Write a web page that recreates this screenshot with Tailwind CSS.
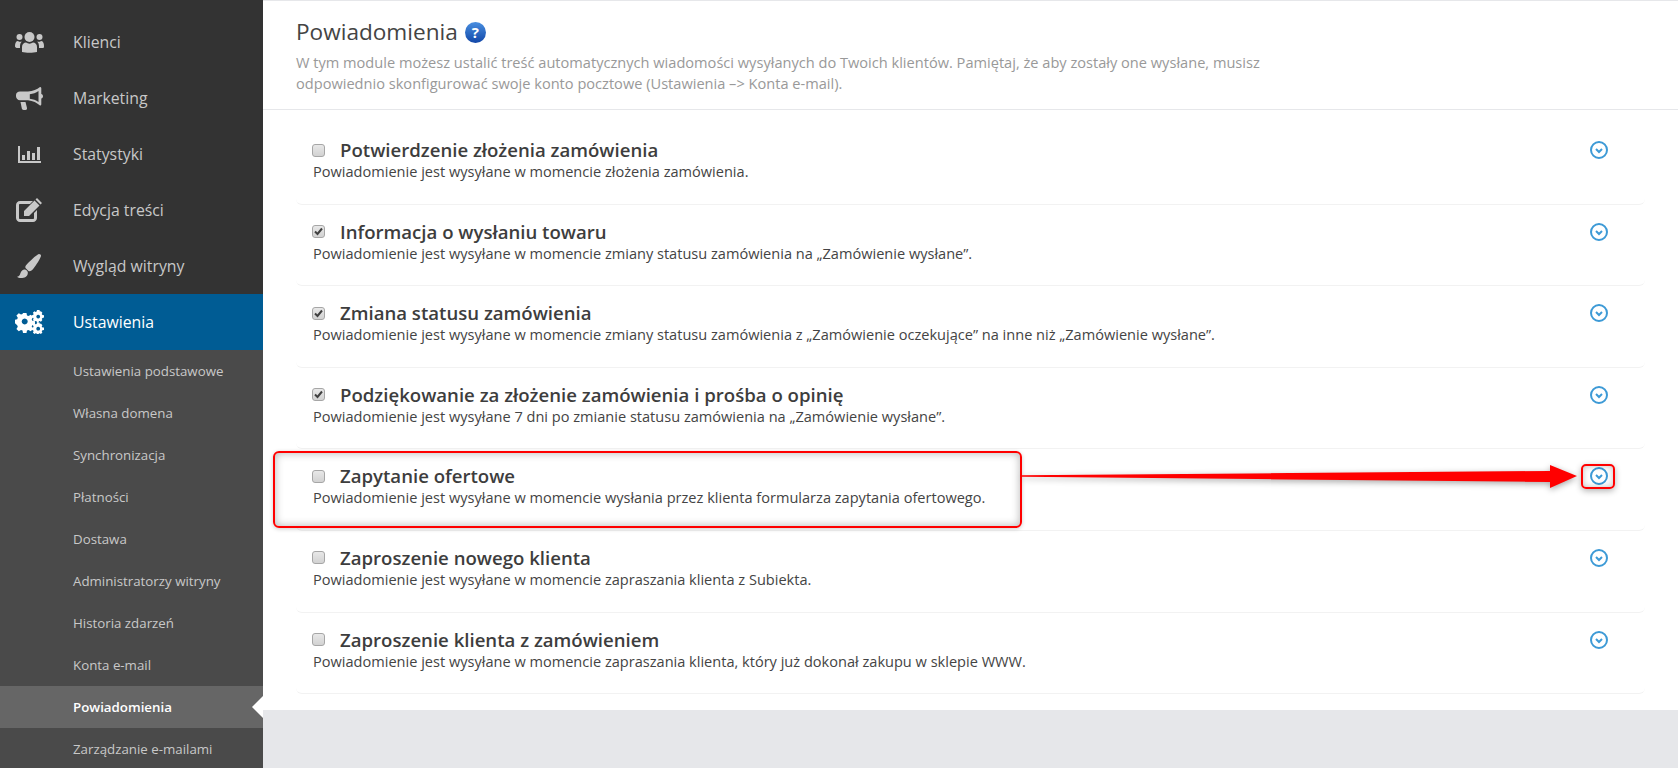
<!DOCTYPE html>
<html lang="pl">
<head>
  <meta charset="UTF-8">
  <title>Powiadomienia</title>
  <script src="https://cdn.jsdelivr.net/npm/@tailwindcss/browser@4"></script>
</head>
<body class="h-screen overflow-hidden bg-[#e6e7ea] font-['Open_Sans',sans-serif]">
  <div class="relative flex h-[768px] overflow-hidden">
    <!-- sidebar -->
    <aside class="w-[263px] shrink-0 bg-[#333333] pt-[14px] text-[#c8c8c8]">
      <a class="flex h-14 items-center"><span class="flex w-[73px] justify-center pr-[15px]">
        <svg class="h-[22px] w-[29px]" viewBox="0 0 29 22" fill="#c8c8c8"><circle cx="14.500" cy="6" r="5"/><circle cx="4.500" cy="6" r="3"/><circle cx="24.500" cy="6" r="3"/><path d="M7 21v-5c0-3 2-4.500 4-4.500 2 1.500 5 1.500 7 0 2 0 4 1.500 4 4.500v5c-4 1-11 1-15 0z"/><path d="M0 15c0-3 1-5 3-5 1 1 3 1 4 .5-1.500 1-2 2.800-2 5v1.500H1.500C.5 16.500 0 16 0 15zM29 15c0-3-1-5-3-5-1 1-3 1-4 .5 1.500 1 2 2.800 2 5v1.500h3.500c1 0 1.500-.5 1.500-1.500z"/></svg></span>
        <span class="mt-[2px] text-[15.800px]">Klienci</span></a>
      <a class="flex h-14 items-center"><span class="flex w-[73px] justify-center pr-[15px]">
        <svg class="h-[23px] w-[27px]" viewBox="0 0 27 23" fill="#c8c8c8"><path d="M24 0c.800 0 1.300.600 1.300 1.300v5.700c1 .300 1.700 1.200 1.700 2.300s-.700 2-1.700 2.300v5.700c0 .700-.500 1.300-1.300 1.300-3-2.600-7-4.800-12-5.300H4c-2.200 0-4-1.800-4-4V8c0-2.200 1.800-3.500 4-3.500h8c5-.5 9-1.900 12-4.500zm-1.500 4c-2.500 1.800-5.500 2.900-8.700 3.300v4.400c3.200.4 6.200 1.500 8.700 3.300z"/><path d="M4.500 15h5l1.500 6c.2 1-.5 2-1.500 2H7.500c-.8 0-1.400-.5-1.600-1.200z"/></svg></span>
        <span class="mt-[2px] text-[15.800px]">Marketing</span></a>
      <a class="flex h-14 items-center"><span class="flex w-[73px] justify-center pr-[15px]">
        <svg class="h-[17px] w-[23px]" viewBox="0 0 23 17" fill="#c8c8c8"><path d="M0 0h2v15h21v2H0z"/><rect x="4" y="9" width="3" height="5"/><rect x="9" y="5" width="3" height="9"/><rect x="14" y="7" width="3" height="7"/><rect x="19" y="1" width="3" height="13"/></svg></span>
        <span class="mt-[2px] text-[15.800px]">Statystyki</span></a>
      <a class="flex h-14 items-center"><span class="flex w-[73px] justify-center pr-[15px]">
        <svg class="h-[24px] w-[26px]" viewBox="0 0 26 24" fill="#c8c8c8"><path d="M4 3h13l-3 3H4c-.600 0-1 .400-1 1v13c0 .600.400 1 1 1h13c.600 0 1-.400 1-1v-5l3-3v8c0 2.200-1.800 4-4 4H4c-2.200 0-4-1.800-4-4V7c0-2.200 1.800-4 4-4z"/><path d="M21 0l5 5-1.500 1.500-5-5zM18.500 2.500l5 5L13 18H8v-5z"/></svg></span>
        <span class="mt-[2px] text-[15.800px]">Edycja treści</span></a>
      <a class="flex h-14 items-center"><span class="flex w-[73px] justify-center pr-[15px]">
        <svg class="h-[24px] w-[24px]" viewBox="0 0 24 24" fill="#c8c8c8"><path d="M22 0c1.200 0 2 .800 2 1.800 0 .700-.500 1.700-1.200 2.900C20.500 9 17 14.500 14.500 16.500c-1 .800-2 1-3 .600L8.500 14c-.400-1 0-2.200 1-3.200C12 8 19 1 22 0z"/><path d="M7 15.500c1-.200 2 .100 2.800.900.800.800 1.200 1.800 1 2.800C10.500 22.500 7.500 24 4 24c-1.800 0-3.200-.400-4-1.200 1.500-.500 2.500-1 3-2.300.500-2 1.500-4.500 4-5z"/></svg></span>
        <span class="mt-[2px] text-[15.800px]">Wygląd witryny</span></a>
      <a class="flex h-14 items-center bg-[#005c94] text-white"><span class="flex w-[73px] justify-center pr-[15px]">
        <svg class="h-[24px] w-[29px]" viewBox="0 0 29 24" fill="#fff"><path fill-rule="evenodd" d="M8 4h3.500l.5 2.500 1.500.6 2.200-1.400 2.400 2.400-1.400 2.200.6 1.500 2.700.5v3.400l-2.700.5-.6 1.500 1.400 2.200-2.400 2.400-2.200-1.400-1.500.6-.5 2.500H8l-.5-2.500-1.500-.6-2.200 1.400-2.400-2.400 1.400-2.200-.6-1.500L0 14.200v-3.400l2.200-.5.6-1.500-1.400-2.200 2.400-2.400L6 5.600l1.500-.6zM9.700 9.500a3 3 0 1 0 .01 0z" transform="translate(0 -1)"/><path fill-rule="evenodd" d="M22 0h2.500l.4 1.500 1-.3 1.500 1.600-.7 1.200.8 1 1.500.2v2.400l-1.500.3-.8 1 .7 1.200-1.500 1.600-1.200-.7-.8.3-.4 1.400H22l-.4-1.400-1-.4-1.200.7-1.500-1.600.7-1.200-.5-1-1.500-.3V5.200l1.500-.2.500-1-.7-1.200 1.500-1.600 1.200.7 1-.4zM23.200 4.700a1.900 1.900 0 1 0 .01 0z"/><path fill-rule="evenodd" d="M22 12.500h2.500l.4 1.400 1-.3 1.500 1.600-.7 1.200.8 1 1.500.2V20l-1.500.3-.8 1 .7 1.200-1.500 1.500-1.200-.7-.8.3-.2.400H22l-.4-.4-1-.3-1.200.7-1.500-1.500.7-1.200-.5-1-1.500-.3v-2.400l1.500-.2.500-1-.7-1.200 1.500-1.600 1.200.7 1-.4zM23.200 16.800a1.900 1.900 0 1 0 .01 0z"/></svg></span>
        <span class="mt-[2px] text-[15.800px]">Ustawienia</span></a>
      <nav class="bg-[#4a4a4a] text-[13.300px]">
        <a class="flex h-[42px] items-center pl-[73px] pt-[1px]">Ustawienia podstawowe</a>
        <a class="flex h-[42px] items-center pl-[73px] pt-[1px]">Własna domena</a>
        <a class="flex h-[42px] items-center pl-[73px] pt-[1px]">Synchronizacja</a>
        <a class="flex h-[42px] items-center pl-[73px] pt-[1px]">Płatności</a>
        <a class="flex h-[42px] items-center pl-[73px] pt-[1px]">Dostawa</a>
        <a class="flex h-[42px] items-center pl-[73px] pt-[1px]">Administratorzy witryny</a>
        <a class="flex h-[42px] items-center pl-[73px] pt-[1px]">Historia zdarzeń</a>
        <a class="flex h-[42px] items-center pl-[73px] pt-[1px]">Konta e-mail</a>
        <a class="relative flex h-[42px] items-center bg-[#666666] pl-[73px] pt-[1px] font-semibold text-white">Powiadomienia
          <span class="absolute right-0 top-[10px] h-0 w-0 border-y-[11px] border-r-[11px] border-y-transparent border-r-white"></span></a>
        <a class="flex h-[42px] items-center pl-[73px] pt-[1px]">Zarządzanie e-mailami</a>
      </nav>
    </aside>

    <!-- main -->
    <main class="flex-1 self-start bg-white">
      <header class="h-[110px] border-y border-[#e6e7ea] pl-[33px] pt-[15px]">
        <div class="flex items-center gap-[7px]">
          <h1 class="text-[22.600px] leading-[32px] text-[#444]">Powiadomienia</h1>
          <span class="flex h-[21px] w-[21px] items-center justify-center rounded-full bg-gradient-to-b from-[#4a8fe0] to-[#1247a8] text-[15px] leading-none font-bold text-white">?</span>
        </div>
        <p class="mt-[4px] w-[1010px] text-[14.600px] leading-[21px] text-[#999]">W tym module możesz ustalić treść automatycznych wiadomości wysyłanych do Twoich klientów. Pamiętaj, że aby zostały one wysłane, musisz odpowiednio skonfigurować swoje konto pocztowe (Ustawienia –&gt; Konta e-mail).</p>
      </header>
      <section class="ml-[33px] w-[1349px] pb-[15.500px] pt-[13px]">
        <div class="flex h-[81.600px] items-start justify-between rounded-b-md border-b border-[#f2f2f2] pl-[17px] pr-[36px] pt-[16px]">
          <div>
            <div class="flex h-[22px] items-center"><span class="relative -ml-[1px] mr-[15px] flex"><input type="checkbox" class="h-[13px] w-[13px] appearance-none rounded-[3px] border border-[#a6a6a6] bg-gradient-to-b from-[#e8e8e8] to-[#d2d2d2]"></span><h2 class="text-[18.600px] font-semibold text-[#3d3d3d]">Potwierdzenie złożenia zamówienia</h2></div>
            <p class="text-[14.570px] leading-[20px] text-[#444]">Powiadomienie jest wysyłane w momencie złożenia zamówienia.</p>
          </div>
          <svg class="mt-[1px] h-5 w-5" viewBox="0 0 20 20" fill="none" stroke="#3d9ad6" stroke-width="2"><circle cx="10" cy="10" r="8"/><path d="M7 9l3 3 3-3"/></svg>
        </div>
        <div class="flex h-[81.600px] items-start justify-between rounded-b-md border-b border-[#f2f2f2] pl-[17px] pr-[36px] pt-[16px]">
          <div>
            <div class="flex h-[22px] items-center"><span class="relative -ml-[1px] mr-[15px] flex"><input type="checkbox" checked class="h-[13px] w-[13px] appearance-none rounded-[3px] border border-[#a6a6a6] bg-gradient-to-b from-[#e8e8e8] to-[#d2d2d2]"><svg class="absolute left-[2px] top-[2px] h-[9px] w-[9px]" viewBox="0 0 9 9" fill="none" stroke="#404040" stroke-width="2"><path d="M1 4.500l2.500 2.500L8 1.500"/></svg></span><h2 class="text-[18.600px] font-semibold text-[#3d3d3d]">Informacja o wysłaniu towaru</h2></div>
            <p class="text-[14.570px] leading-[20px] text-[#444]">Powiadomienie jest wysyłane w momencie zmiany statusu zamówienia na „Zamówienie wysłane”.</p>
          </div>
          <svg class="mt-[1px] h-5 w-5" viewBox="0 0 20 20" fill="none" stroke="#3d9ad6" stroke-width="2"><circle cx="10" cy="10" r="8"/><path d="M7 9l3 3 3-3"/></svg>
        </div>
        <div class="flex h-[81.600px] items-start justify-between rounded-b-md border-b border-[#f2f2f2] pl-[17px] pr-[36px] pt-[16px]">
          <div>
            <div class="flex h-[22px] items-center"><span class="relative -ml-[1px] mr-[15px] flex"><input type="checkbox" checked class="h-[13px] w-[13px] appearance-none rounded-[3px] border border-[#a6a6a6] bg-gradient-to-b from-[#e8e8e8] to-[#d2d2d2]"><svg class="absolute left-[2px] top-[2px] h-[9px] w-[9px]" viewBox="0 0 9 9" fill="none" stroke="#404040" stroke-width="2"><path d="M1 4.500l2.500 2.500L8 1.500"/></svg></span><h2 class="text-[18.600px] font-semibold text-[#3d3d3d]">Zmiana statusu zamówienia</h2></div>
            <p class="text-[14.570px] leading-[20px] text-[#444]">Powiadomienie jest wysyłane w momencie zmiany statusu zamówienia z „Zamówienie oczekujące” na inne niż „Zamówienie wysłane”.</p>
          </div>
          <svg class="mt-[1px] h-5 w-5" viewBox="0 0 20 20" fill="none" stroke="#3d9ad6" stroke-width="2"><circle cx="10" cy="10" r="8"/><path d="M7 9l3 3 3-3"/></svg>
        </div>
        <div class="flex h-[81.600px] items-start justify-between rounded-b-md border-b border-[#f2f2f2] pl-[17px] pr-[36px] pt-[16px]">
          <div>
            <div class="flex h-[22px] items-center"><span class="relative -ml-[1px] mr-[15px] flex"><input type="checkbox" checked class="h-[13px] w-[13px] appearance-none rounded-[3px] border border-[#a6a6a6] bg-gradient-to-b from-[#e8e8e8] to-[#d2d2d2]"><svg class="absolute left-[2px] top-[2px] h-[9px] w-[9px]" viewBox="0 0 9 9" fill="none" stroke="#404040" stroke-width="2"><path d="M1 4.500l2.500 2.500L8 1.500"/></svg></span><h2 class="text-[18.600px] font-semibold text-[#3d3d3d]">Podziękowanie za złożenie zamówienia i prośba o opinię</h2></div>
            <p class="text-[14.570px] leading-[20px] text-[#444]">Powiadomienie jest wysyłane 7 dni po zmianie statusu zamówienia na „Zamówienie wysłane”.</p>
          </div>
          <svg class="mt-[1px] h-5 w-5" viewBox="0 0 20 20" fill="none" stroke="#3d9ad6" stroke-width="2"><circle cx="10" cy="10" r="8"/><path d="M7 9l3 3 3-3"/></svg>
        </div>
        <div class="flex h-[81.600px] items-start justify-between rounded-b-md border-b border-[#f2f2f2] pl-[17px] pr-[36px] pt-[16px]">
          <div>
            <div class="flex h-[22px] items-center"><span class="relative -ml-[1px] mr-[15px] flex"><input type="checkbox" class="h-[13px] w-[13px] appearance-none rounded-[3px] border border-[#a6a6a6] bg-gradient-to-b from-[#e8e8e8] to-[#d2d2d2]"></span><h2 class="text-[18.600px] font-semibold text-[#3d3d3d]">Zapytanie ofertowe</h2></div>
            <p class="text-[14.570px] leading-[20px] text-[#444]">Powiadomienie jest wysyłane w momencie wysłania przez klienta formularza zapytania ofertowego.</p>
          </div>
          <svg class="mt-[1px] h-5 w-5" viewBox="0 0 20 20" fill="none" stroke="#3d9ad6" stroke-width="2"><circle cx="10" cy="10" r="8"/><path d="M7 9l3 3 3-3"/></svg>
        </div>
        <div class="flex h-[81.600px] items-start justify-between rounded-b-md border-b border-[#f2f2f2] pl-[17px] pr-[36px] pt-[16px]">
          <div>
            <div class="flex h-[22px] items-center"><span class="relative -ml-[1px] mr-[15px] flex"><input type="checkbox" class="h-[13px] w-[13px] appearance-none rounded-[3px] border border-[#a6a6a6] bg-gradient-to-b from-[#e8e8e8] to-[#d2d2d2]"></span><h2 class="text-[18.600px] font-semibold text-[#3d3d3d]">Zaproszenie nowego klienta</h2></div>
            <p class="text-[14.570px] leading-[20px] text-[#444]">Powiadomienie jest wysyłane w momencie zapraszania klienta z Subiekta.</p>
          </div>
          <svg class="mt-[1px] h-5 w-5" viewBox="0 0 20 20" fill="none" stroke="#3d9ad6" stroke-width="2"><circle cx="10" cy="10" r="8"/><path d="M7 9l3 3 3-3"/></svg>
        </div>
        <div class="flex h-[81.600px] items-start justify-between rounded-b-md border-b border-[#f2f2f2] pl-[17px] pr-[36px] pt-[16px]">
          <div>
            <div class="flex h-[22px] items-center"><span class="relative -ml-[1px] mr-[15px] flex"><input type="checkbox" class="h-[13px] w-[13px] appearance-none rounded-[3px] border border-[#a6a6a6] bg-gradient-to-b from-[#e8e8e8] to-[#d2d2d2]"></span><h2 class="text-[18.600px] font-semibold text-[#3d3d3d]">Zaproszenie klienta z zamówieniem</h2></div>
            <p class="text-[14.570px] leading-[20px] text-[#444]">Powiadomienie jest wysyłane w momencie zapraszania klienta, który już dokonał zakupu w sklepie WWW.</p>
          </div>
          <svg class="mt-[1px] h-5 w-5" viewBox="0 0 20 20" fill="none" stroke="#3d9ad6" stroke-width="2"><circle cx="10" cy="10" r="8"/><path d="M7 9l3 3 3-3"/></svg>
        </div>
      </section>
    </main>

    <!-- annotation drawn over the page -->
    <div class="pointer-events-none absolute left-[273px] top-[451px] h-[77px] w-[749px] rounded-[6px] border-2 border-[#f00] shadow-[inset_0_0_8px_rgba(0,0,0,0.3),0_1px_4px_rgba(0,0,0,0.2)]"></div>
    <div class="pointer-events-none absolute left-[1581px] top-[464px] h-[25px] w-[34px] rounded-[5px] border-2 border-[#f00] shadow-[inset_0_0_6px_rgba(0,0,0,0.25),0_2px_6px_rgba(0,0,0,0.3)]"></div>
    <svg class="pointer-events-none absolute left-[1022px] top-[460px] drop-shadow-[0_2px_3px_rgba(0,0,0,0.35)]" width="558" height="32" viewBox="0 0 558 32"><polygon fill="#f00" points="0,15.200 528,11 528,5 555,16 528,28 528,22 0,16.800"/></svg>
  </div>
</body>
</html>
